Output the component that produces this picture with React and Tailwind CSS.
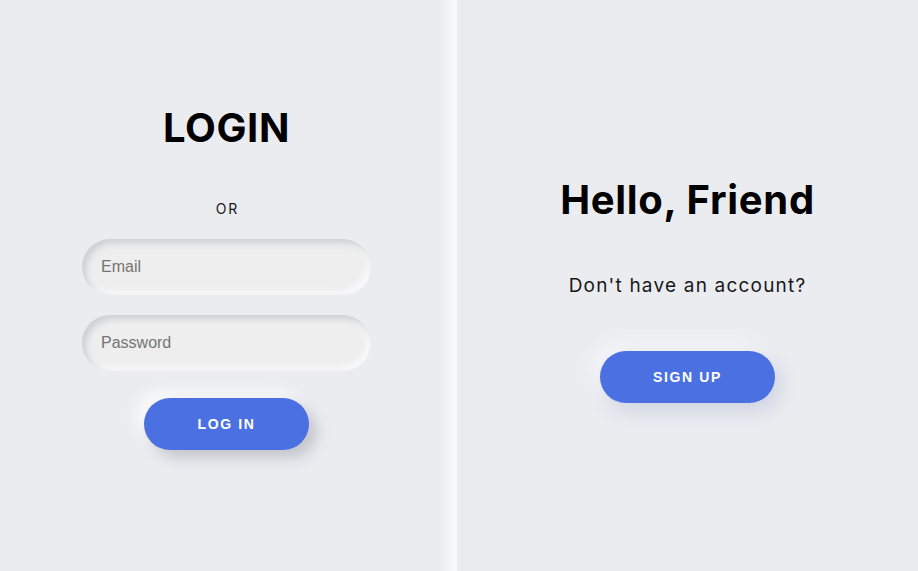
export default function App() {
  return (
    <div className="flex w-[918px] h-[571px] bg-[#ebecf0] overflow-hidden" style={{ fontFamily: "Inter, 'Noto Sans', sans-serif" }}>
      <div className="w-[457px] h-full flex flex-col items-center pt-[104px] pr-[4px] bg-[linear-gradient(to_right,#ebecf0_calc(100%-18px),#fafafc)]">
        <h1 className="text-[40px] leading-[48px] font-bold text-black tracking-[0.6px]">LOGIN</h1>
        <div className="mt-[47px] text-[14px] leading-[20px] text-[#181818] tracking-[1.8px] pl-[1.8px]">OR</div>
        <input
          className="mt-[20px] w-[289px] h-[56px] rounded-full bg-[#eeeeee] pl-[19px] text-[16px] outline-none placeholder:text-[#757575] shadow-[inset_4px_4px_6px_#cdcfd1,inset_-4px_-4px_6px_#f9f9f9]"
          style={{ fontFamily: "'Liberation Sans', Arial, sans-serif" }}
          placeholder="Email"
        />
        <input
          className="mt-[20px] w-[289px] h-[56px] rounded-full bg-[#eeeeee] pl-[19px] text-[16px] outline-none placeholder:text-[#757575] shadow-[inset_4px_4px_6px_#cdcfd1,inset_-4px_-4px_6px_#f9f9f9]"
          style={{ fontFamily: "'Liberation Sans', Arial, sans-serif" }}
          placeholder="Password"
        />
        <button
          className="mt-[27px] w-[165px] h-[52px] rounded-full bg-[#4b70e2] text-white text-[14px] font-bold tracking-[1.6px] shadow-[8px_8px_14px_#c3c6cc,-8px_-8px_14px_#f9f9f9]"
          style={{ fontFamily: "'Liberation Sans', Arial, sans-serif" }}
        >
          LOG IN
        </button>
      </div>
      <div className="flex-1 h-full flex flex-col items-center pt-[176px]">
        <h2 className="text-[40px] leading-[48px] font-bold text-black tracking-[0.7px]">Hello, Friend</h2>
        <p className="mt-[48px] text-[19px] leading-[28px] text-[#181818] tracking-[1.2px]">Don't have an account?</p>
        <button
          className="mt-[51px] w-[175px] h-[52px] rounded-full bg-[#4b70e2] text-white text-[14px] font-bold tracking-[1.6px] shadow-[6px_8px_20px_#cdd3e2,-8px_-8px_18px_#f7f7f9]"
          style={{ fontFamily: "'Liberation Sans', Arial, sans-serif" }}
        >
          SIGN UP
        </button>
      </div>
    </div>
  );
}
